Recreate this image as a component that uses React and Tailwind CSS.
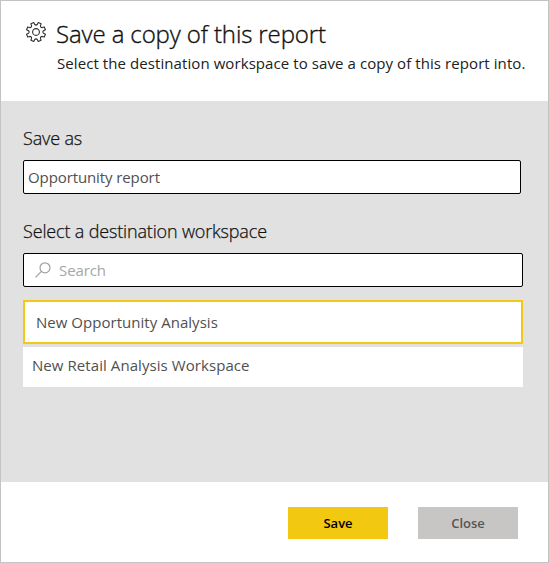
const polar = (r, deg) => {
  const a = (deg * Math.PI) / 180;
  return `${(r * Math.cos(a)).toFixed(2)} ${(r * Math.sin(a)).toFixed(2)}`;
};

// Eight-toothed outline with rounded valleys between the teeth.
const gearPath =
  Array.from({ length: 8 }, (_, i) => {
    const c = i * 45 + 22.5;
    return `${i ? "L" : "M"}${polar(7.6, c - 13)} L${polar(9.7, c - 9)} L${polar(9.7, c + 9)} L${polar(7.6, c + 13)} Q${polar(6.2, c + 22.5)} ${polar(7.6, c + 32)}`;
  }).join(" ") + "Z";

function GearIcon() {
  return (
    <svg className="h-5 w-5 shrink-0" viewBox="-10 -10 20 20" fill="none" stroke="#303030" strokeWidth="1.1" strokeLinejoin="round">
      <path d={gearPath} />
      <circle r="3.4" />
    </svg>
  );
}

function SearchIcon() {
  return (
    <svg className="h-4 w-4 shrink-0" viewBox="0 0 16 16" fill="none" stroke="#a0a0a0" strokeWidth="1.2">
      <circle cx="10" cy="5.8" r="5" />
      <path d="M6.4 9.4 0.5 15.3" />
    </svg>
  );
}

export default function App() {
  return (
    <div className="flex h-[563px] w-[549px] flex-col border border-[#c3c3c3] bg-white font-['Open_Sans','Noto_Sans',sans-serif] text-[#212121]">
      <header className="flex h-[100px] shrink-0 items-start pl-[25px] pt-[16px]">
        <div className="mt-[5px]"><GearIcon /></div>
        <div className="ml-[10px]">
          <h1 className="h-[32px] whitespace-nowrap text-[24px] font-light leading-[34px] tracking-[-0.12px] text-[#111111] [-webkit-text-stroke:0.35px_#111111]">Save a copy of this report</h1>
          <p className="whitespace-nowrap pl-px text-[15px] leading-[28px] tracking-[0.08px]">Select the destination workspace to save a copy of this report into.</p>
        </div>
      </header>

      <main className="flex h-[381px] shrink-0 flex-col bg-[#e1e1e1] pl-[22px] pt-[25px]">
        <label className="h-[34px] whitespace-nowrap text-[18px] font-light leading-[25px] tracking-[-0.16px] text-[#111111] [-webkit-text-stroke:0.25px_#111111]">Save as</label>
        <div className="flex h-[34px] w-[498px] shrink-0 items-center rounded-[2px] border border-black bg-white pl-1 text-[15px] tracking-[-0.1px] text-[#505050]">
          <span>Opportunity report</span>
        </div>
        <label className="mt-[25px] h-[34px] whitespace-nowrap text-[18px] font-light leading-[25px] tracking-[-0.16px] text-[#111111] [-webkit-text-stroke:0.25px_#111111]">Select a destination workspace</label>
        <div className="flex h-[34px] w-[500px] shrink-0 items-center rounded-[2px] border border-black bg-white pl-[11px] text-[15px] tracking-[-0.1px] text-[#a6a6a6]">
          <SearchIcon />
          <span className="ml-2">Search</span>
        </div>
        <div className="mt-[13px] flex h-[44px] w-[500px] shrink-0 items-center border-2 border-[#f2c811] bg-white pl-[11px] text-[15px] tracking-[0.03px] text-[#505050]">
          <span>New Opportunity Analysis</span>
        </div>
        <div className="mt-[3px] flex h-[40px] w-[500px] shrink-0 items-center bg-white pb-[4px] pl-[9px] text-[15px] tracking-[0.07px] text-[#505050]">
          <span>New Retail Analysis Workspace</span>
        </div>
      </main>

      <footer className="flex grow items-start justify-end gap-[30px] pr-[30px] pt-[25px] text-[13px] font-semibold">
        <button className="h-[32px] w-[100px] bg-[#f2c811] pt-[2px] text-black">Save</button>
        <button className="h-[32px] w-[100px] bg-[#c8c6c4] pt-[2px] text-[#555555]">Close</button>
      </footer>
    </div>
  );
}
